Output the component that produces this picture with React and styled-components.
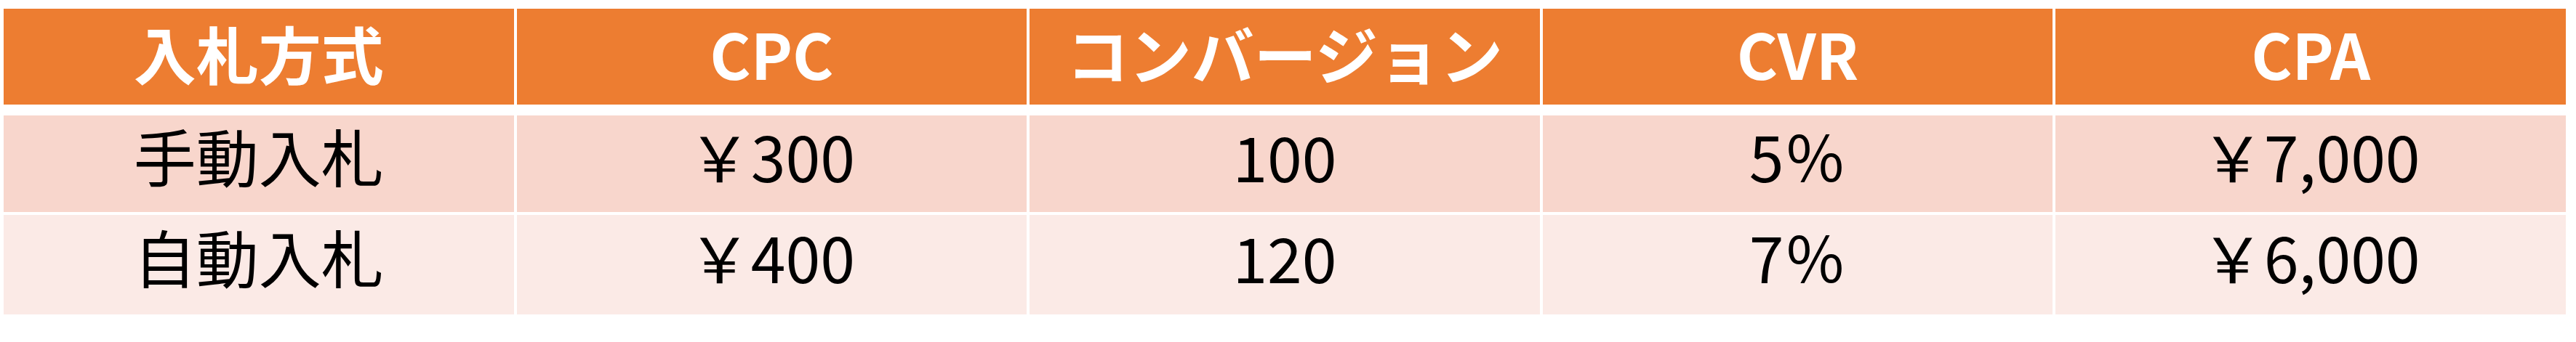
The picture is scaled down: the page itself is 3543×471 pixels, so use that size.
import React from "react";
import styled, { createGlobalStyle } from "styled-components";

const GlobalStyle = createGlobalStyle`
  html, body {
    margin: 0;
    padding: 0;
    background: #ffffff;
  }
  body {
    font-family: "Noto Sans CJK JP", "Noto Sans", sans-serif;
  }
`;

const columns = ["入札方式", "CPC", "コンバージョン", "CVR", "CPA"];

const rows = [
  { cells: ["手動入札", "￥300", "100", "5％", "￥7,000"], tone: "dark", height: 133 },
  { cells: ["自動入札", "￥400", "120", "7％", "￥6,000"], tone: "light", height: 137 },
];

const App = () => {
  return (
    <Page>
      <GlobalStyle />
      <Table>
        <HeaderRow>
          {columns.map((label) => (
            <HeadCell key={label}>{label}</HeadCell>
          ))}
        </HeaderRow>
        {rows.map((row) => (
          <Row key={row.cells[0]} height={row.height}>
            {row.cells.map((value, i) => (
              <Cell key={i} tone={row.tone}>
                {value}
              </Cell>
            ))}
          </Row>
        ))}
      </Table>
    </Page>
  );
};

const Page = styled.div`
  width: 3543px;
  height: 471px;
  box-sizing: border-box;
  padding: 12px 14px 0 5px;
`;

const Table = styled.div`
  display: flex;
  flex-direction: column;
  gap: 4px;
`;

const HeaderRow = styled.div`
  display: grid;
  grid-template-columns: repeat(5, 1fr);
  column-gap: 4px;
  height: 132px;
  margin-bottom: 11px;
`;

const HeadCell = styled.div`
  display: flex;
  align-items: center;
  justify-content: center;
  background: #ed7d31;
  color: #ffffff;
  font-size: 86px;
  font-weight: 700;
  line-height: 1;
  padding-bottom: 10px;
`;

const Row = styled.div`
  display: grid;
  grid-template-columns: repeat(5, 1fr);
  column-gap: 4px;
  height: ${(p) => p.height}px;
`;

const Cell = styled.div`
  display: flex;
  align-items: center;
  justify-content: center;
  background: ${(p) => (p.tone === "dark" ? "#f8d6cc" : "#fbeae6")};
  color: #000000;
  font-size: 86px;
  font-weight: 400;
  line-height: 1;
  padding-bottom: 24px;
`;

export default App;
